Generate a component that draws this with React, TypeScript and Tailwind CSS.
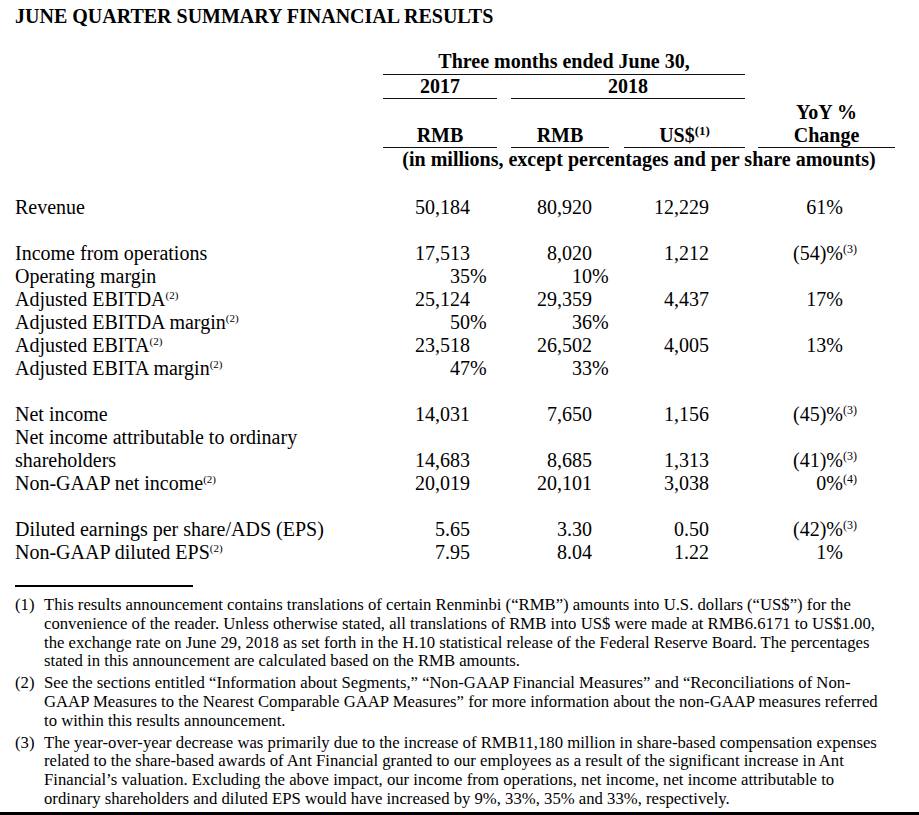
const serif = { fontFamily: '"Liberation Serif", "Times New Roman", serif' };

type Row = {
  label?: React.ReactNode;
  a?: React.ReactNode;
  b?: React.ReactNode;
  c?: React.ReactNode;
  d?: React.ReactNode;
};

function Hang({ children }: { children: React.ReactNode }) {
  return <span className="inline-block w-0 whitespace-nowrap text-left">{children}</span>;
}

function Note({ n }: { n: number }) {
  return <sup className="top-[-7px] text-[11px]">({n})</sup>;
}

function Pct({ v }: { v: string }) {
  return (
    <>
      {v}
      <Hang>%</Hang>
    </>
  );
}

function Yoy({ v, n }: { v: string; n?: number }) {
  return (
    <>
      {v}
      {n ? (
        <Hang>
          <sup className="top-[-7px] text-[12px]">({n})</sup>
        </Hang>
      ) : null}
    </>
  );
}

const rows: (Row | null)[] = [
  { label: "Revenue", a: "50,184", b: "80,920", c: "12,229", d: <Yoy v="61%" /> },
  null,
  { label: "Income from operations", a: "17,513", b: "8,020", c: "1,212", d: <Yoy v="(54)%" n={3} /> },
  { label: "Operating margin", a: <Pct v="35" />, b: <Pct v="10" /> },
  { label: <>Adjusted EBITDA<Note n={2} /></>, a: "25,124", b: "29,359", c: "4,437", d: <Yoy v="17%" /> },
  { label: <>Adjusted EBITDA margin<Note n={2} /></>, a: <Pct v="50" />, b: <Pct v="36" /> },
  { label: <>Adjusted EBITA<Note n={2} /></>, a: "23,518", b: "26,502", c: "4,005", d: <Yoy v="13%" /> },
  { label: <>Adjusted EBITA margin<Note n={2} /></>, a: <Pct v="47" />, b: <Pct v="33" /> },
  null,
  { label: "Net income", a: "14,031", b: "7,650", c: "1,156", d: <Yoy v="(45)%" n={3} /> },
  { label: "Net income attributable to ordinary" },
  { label: "shareholders", a: "14,683", b: "8,685", c: "1,313", d: <Yoy v="(41)%" n={3} /> },
  { label: <>Non-GAAP net income<Note n={2} /></>, a: "20,019", b: "20,101", c: "3,038", d: <Yoy v="0%" n={4} /> },
  null,
  { label: "Diluted earnings per share/ADS (EPS)", a: "5.65", b: "3.30", c: "0.50", d: <Yoy v="(42)%" n={3} /> },
  { label: <>Non-GAAP diluted EPS<Note n={2} /></>, a: "7.95", b: "8.04", c: "1.22", d: <Yoy v="1%" /> },
];

const notes: string[][] = [
  [
    "This results announcement contains translations of certain Renminbi (\u201cRMB\u201d) amounts into U.S. dollars (\u201cUS$\u201d) for the",
    "convenience of the reader. Unless otherwise stated, all translations of RMB into US$ were made at RMB6.6171 to US$1.00,",
    "the exchange rate on June 29, 2018 as set forth in the H.10 statistical release of the Federal Reserve Board. The percentages",
    "stated in this announcement are calculated based on the RMB amounts.",
  ],
  [
    "See the sections entitled \u201cInformation about Segments,\u201d \u201cNon-GAAP Financial Measures\u201d and \u201cReconciliations of Non-",
    "GAAP Measures to the Nearest Comparable GAAP Measures\u201d for more information about the non-GAAP measures referred",
    "to within this results announcement.",
  ],
  [
    "The year-over-year decrease was primarily due to the increase of RMB11,180 million in share-based compensation expenses",
    "related to the share-based awards of Ant Financial granted to our employees as a result of the significant increase in Ant",
    "Financial\u2019s valuation.  Excluding the above impact, our income from operations, net income, net income attributable to",
    "ordinary shareholders and diluted EPS would have increased by 9%, 33%, 35% and 33%, respectively.",
  ],
];

const cols = "grid grid-cols-[383px_114px_14px_98px_15px_121px_13px_137px]";
const rule = "border-b-[1.5px] border-[#111]";

export default function App() {
  return (
    <div style={serif} className="flex h-[815px] w-[919px] flex-col overflow-hidden bg-white text-[20px] leading-[23px] text-black">
      <h1 className="pl-[15px] pt-[5px] text-[20px] font-bold leading-[23px]">
        JUNE QUARTER SUMMARY FINANCIAL RESULTS
      </h1>

      <div className={`${cols} mt-[22px] font-bold`}>
        <div className={`row-start-1 col-start-2 col-span-5 pb-[1px] text-center ${rule}`}>
          Three months ended June 30,
        </div>

        <div className={`row-start-2 col-start-2 text-center ${rule}`}>2017</div>
        <div className={`row-start-2 col-start-4 col-span-3 text-center ${rule}`}>2018</div>

        <div className="row-start-3 col-start-8 pt-[2px] text-center">YoY %</div>

        <div className={`row-start-4 col-start-2 text-center ${rule}`}>RMB</div>
        <div className={`row-start-4 col-start-4 text-center ${rule}`}>RMB</div>
        <div className={`row-start-4 col-start-6 text-center ${rule}`}>
          US$<sup className="top-[-7px] text-[13px]">(1)</sup>
        </div>
        <div className={`row-start-4 col-start-8 text-center ${rule}`}>Change</div>

        <div className="row-start-5 col-start-2 col-span-7 text-center">
          (in millions, except percentages and per share amounts)
        </div>
      </div>

      <div className={`${cols} mt-[25px]`}>
        {rows.map((r, i) =>
          r ? (
            <div key={i} className="contents">
              <div className="col-start-1 whitespace-nowrap pl-[15px]">{r.label}</div>
              <div className="col-start-2 pr-[27px] text-right">{r.a}</div>
              <div className="col-start-4 pr-[17px] text-right">{r.b}</div>
              <div className="col-start-6 pr-[36px] text-right">{r.c}</div>
              <div className="col-start-8 pr-[52px] text-right">{r.d}</div>
            </div>
          ) : (
            <div key={i} className="col-span-8 h-[23px]" />
          )
        )}
      </div>

      <div className="ml-[15px] mt-[21px] h-[2px] w-[178px] bg-black" />

      <div className="mt-[9px] flex flex-col gap-[3px] text-[16.7px] leading-[18.8px]">
        {notes.map((lines, i) => (
          <div key={i} className="flex pl-[15px]">
            <span className="w-[29px] shrink-0">({i + 1})</span>
            <div className="whitespace-nowrap">
              {lines.map((l, j) => (
                <div key={j}>{l}</div>
              ))}
            </div>
          </div>
        ))}
      </div>

      <div className="mt-auto h-[3px] w-full bg-black" />
    </div>
  );
}
